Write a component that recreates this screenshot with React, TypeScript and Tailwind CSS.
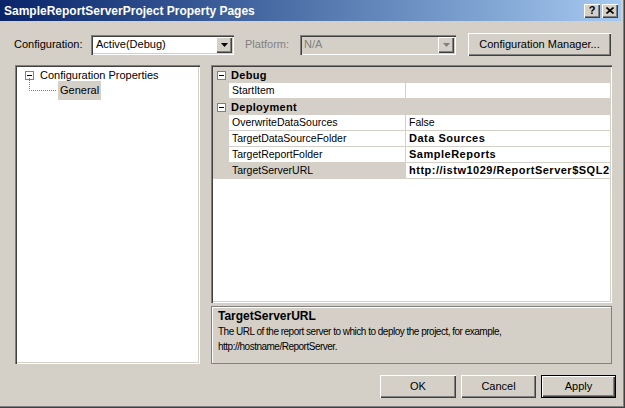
import React from "react";

const sunken =
  "shadow-[inset_1px_1px_0_#808080,inset_2px_2px_0_#404040,inset_-1px_-1px_0_#ffffff,inset_-2px_-2px_0_#d4d0c8]";
const raised =
  "shadow-[inset_1px_1px_0_#ffffff,inset_-1px_-1px_0_#404040,inset_-2px_-2px_0_#808080]";

function Arrow({ disabled }: { disabled?: boolean }) {
  return (
    <div className={`flex h-full w-[16px] items-center justify-center bg-[#d4d0c8] ${raised}`}>
      <svg width="7" height="4" viewBox="0 0 7 4">
        <path d="M0 0h7L3.5 4z" fill={disabled ? "#808080" : "#000"} />
      </svg>
    </div>
  );
}

function Button({ label, isDefault, w }: { label: string; isDefault?: boolean; w: string }) {
  return (
    <div
      className={`flex h-[23px] ${w} items-center justify-center bg-[#d4d0c8] text-[11px] text-black ${
        isDefault
          ? "border border-black shadow-[inset_1px_1px_0_#ffffff,inset_-1px_-1px_0_#404040,inset_-2px_-2px_0_#808080]"
          : raised
      }`}
    >
      {label}
    </div>
  );
}

function MinusBox() {
  return (
    <div className="flex h-[9px] w-[9px] items-center justify-center border border-[#808080] bg-white">
      <div className="h-px w-[5px] bg-black" />
    </div>
  );
}

function Category({ name }: { name: string }) {
  return (
    <div className="flex h-[16px] items-center bg-[#d4d0c8]">
      <div className="flex w-[16px] justify-center">
        <MinusBox />
      </div>
      <span className="pl-[2px] text-[11px] font-bold text-black tracking-[0.3px]">{name}</span>
    </div>
  );
}

function Row({
  name,
  value,
  bold,
  selected,
}: {
  name: string;
  value?: string;
  bold?: boolean;
  selected?: boolean;
}) {
  return (
    <div className="flex h-[16px]">
      <div className="w-[16px] shrink-0 bg-[#d4d0c8]" />
      <div
        className={`flex w-[177px] shrink-0 items-center border-b border-r border-[#d4d0c8] pl-[3px] text-[10.5px] text-black ${
          selected ? "bg-[#d4d0c8]" : "bg-white"
        }`}
      >
        {name}
      </div>
      <div
        className={`flex min-w-0 flex-1 items-center overflow-hidden whitespace-nowrap border-b border-[#d4d0c8] bg-white pl-[3px] text-black ${
          bold ? "text-[11px] font-bold tracking-[0.5px]" : "text-[10.5px]"
        }`}
      >
        {value}
      </div>
    </div>
  );
}

export default function App() {
  return (
    <div
      className="relative flex h-[408px] w-[625px] flex-col bg-[#d4d0c8] shadow-[inset_-1px_-1px_0_#404040,inset_-2px_-2px_0_#808080]"
      style={{ fontFamily: '"Liberation Sans", Arial, sans-serif' }}
    >
      {/* title bar */}
      <div className="flex h-[21px] w-[621px] items-center bg-gradient-to-r from-[#0a246a] to-[#a6caf0] pl-[4px] pr-[3px]">
        <span className="flex-1 text-[12px] font-bold text-white">
          SampleReportServerProject Property Pages
        </span>
        <div className="flex gap-[2px]">
          <div className={`flex h-[14px] w-[16px] items-center justify-center bg-[#d4d0c8] text-[11px] font-bold text-black ${raised}`}>
            ?
          </div>
          <div className={`flex h-[14px] w-[16px] items-center justify-center bg-[#d4d0c8] ${raised}`}>
            <svg width="8" height="7" viewBox="0 0 8 7">
              <path d="M0.5 0.5l7 6M7.5 0.5l-7 6" stroke="#000" strokeWidth="1.6" />
            </svg>
          </div>
        </div>
      </div>

      {/* configuration row */}
      <div className="mt-[12px] flex h-[23px] items-center pl-[14px] text-[11px] text-black">
        <span className="w-[77px]">Configuration:</span>
        <div className={`flex h-[20px] w-[143px] items-center bg-white p-[2px] ${sunken}`}>
          <span className="flex-1 pl-[3px]">Active(Debug)</span>
          <Arrow />
        </div>
        <span className="ml-[11px] w-[55px] text-[#808080]">Platform:</span>
        <div className={`flex h-[20px] w-[156px] items-center bg-[#d4d0c8] p-[2px] ${sunken}`}>
          <span className="flex-1 pl-[2px] text-[#808080]">N/A</span>
          <Arrow disabled />
        </div>
        <div className="ml-[12px]">
          <Button label="Configuration Manager..." w="w-[143px]" />
        </div>
      </div>

      {/* main area */}
      <div className="mt-[9px] flex h-[299px] pl-[15px]">
        <div className={`relative h-full w-[185px] bg-white p-[2px] text-[11px] text-black ${sunken}`}>
          <div className="flex h-[15px] items-center pl-[8px] pt-[2px]">
            <MinusBox />
            <span className="ml-[6px]">Configuration Properties</span>
          </div>
          <div className="flex h-[17px] items-center pl-[12px]">
            <div className="relative h-full w-[29px]">
              <div className="absolute left-0 top-[-4px] h-[13px] border-l border-dotted border-[#808080]" />
              <div className="absolute left-0 top-[8px] w-[27px] border-t border-dotted border-[#808080]" />
            </div>
            <span className="bg-[#d4d0c8] px-[2px] py-[1px]">General</span>
          </div>
        </div>

        <div className="ml-[11px] flex w-[401px] flex-col">
          <div className={`h-[238px] bg-white p-[2px] ${sunken}`}>
            <Category name="Debug" />
            <Row name="StartItem" />
            <Category name="Deployment" />
            <Row name="OverwriteDataSources" value="False" />
            <Row name="TargetDataSourceFolder" value="Data Sources" bold />
            <Row name="TargetReportFolder" value="SampleReports" bold />
            <Row name="TargetServerURL" value="http://istw1029/ReportServer$SQL2005" bold selected />
          </div>
          <div className="mt-[3px] flex-1 border border-[#808080] px-[6px] pt-[2px] shadow-[inset_1px_1px_0_#ffffff] text-black">
            <div className="text-[12px] leading-[14px] font-bold">TargetServerURL</div>
            <div className="mt-[1px] text-[10px] leading-[15px] tracking-[-0.5px]">
              The URL of the report server to which to deploy the project, for example,
              <br />
              http://hostname/ReportServer.
            </div>
          </div>
        </div>
      </div>

      {/* bottom buttons */}
      <div className="mt-[11px] flex justify-end gap-[5px] pr-[9px]">
        <Button label="OK" w="w-[76px]" />
        <Button label="Cancel" w="w-[75px]" />
        <Button label="Apply" w="w-[75px]" isDefault />
      </div>
    </div>
  );
}
